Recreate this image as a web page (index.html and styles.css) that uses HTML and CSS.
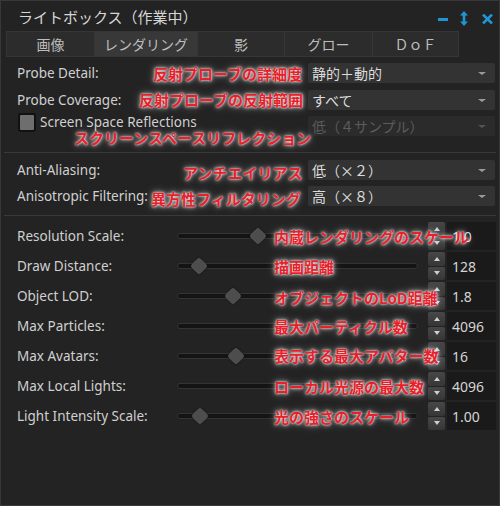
FILE: index.html
```html
<!DOCTYPE html>
<html lang="ja">
<head>
<meta charset="utf-8">
<title>ライトボックス（作業中）</title>
<link rel="stylesheet" href="styles.css">
</head>
<body>
<div class="win">
  <div class="titlebar">
    <span class="title">ライトボックス（作業中）</span>
    <div class="ctrls">
      <svg class="ic min" width="10" height="4" viewBox="0 0 10 4"><rect x="0" y="0" width="10" height="3" fill="#1e95d4"/></svg>
      <svg class="ic ud" width="8" height="15" viewBox="0 0 8 15"><path d="M4 0 L8 4.5 L5.3 4.5 L5.3 10.5 L8 10.5 L4 15 L0 10.5 L2.7 10.5 L2.7 4.5 L0 4.5 Z" fill="#1e95d4"/></svg>
      <svg class="ic cls" width="11" height="10" viewBox="0 0 11 10"><path d="M1 0.5 L10 9.5 M10 0.5 L1 9.5" stroke="#1e95d4" stroke-width="2.6"/></svg>
    </div>
  </div>

  <div class="tabs">
    <div class="tab t1">画像</div>
    <div class="tab t2 active">レンダリング</div>
    <div class="tab t3">影</div>
    <div class="tab t4">グロー</div>
    <div class="tab t5">ＤｏＦ</div>
  </div>

  <div class="panel">
    <div class="drow r1">
      <span class="label">Probe Detail:</span>
      <div class="combo"><span>静的＋動的</span><i class="caret"></i></div>
    </div>
    <div class="drow r2">
      <span class="label">Probe Coverage:</span>
      <div class="combo"><span>すべて</span><i class="caret"></i></div>
    </div>
    <div class="drow r3">
      <label class="check"><span class="box"></span>Screen Space Reflections</label>
      <div class="combo disabled"><span>低（４サンプル）</span><i class="caret"></i></div>
    </div>

    <div class="sep s1"></div>

    <div class="drow r4">
      <span class="label">Anti-Aliasing:</span>
      <div class="combo"><span>低（×２）</span><i class="caret"></i></div>
    </div>
    <div class="drow r5">
      <span class="label">Anisotropic Filtering:</span>
      <div class="combo"><span>高（×８）</span><i class="caret"></i></div>
    </div>

    <div class="sep s2"></div>

    <div class="sliders">
      <div class="srow">
        <span class="slabel">Resolution Scale:</span>
        <div class="track"><span class="thumb" style="left:72px"></span></div>
        <div class="spin"><div class="btns"><b class="up"></b><b class="down"></b></div><div class="val">1.0</div></div>
      </div>
      <div class="srow">
        <span class="slabel">Draw Distance:</span>
        <div class="track"><span class="thumb" style="left:13px"></span></div>
        <div class="spin"><div class="btns"><b class="up"></b><b class="down"></b></div><div class="val">128</div></div>
      </div>
      <div class="srow">
        <span class="slabel">Object LOD:</span>
        <div class="track"><span class="thumb" style="left:47px"></span></div>
        <div class="spin"><div class="btns"><b class="up"></b><b class="down"></b></div><div class="val">1.8</div></div>
      </div>
      <div class="srow">
        <span class="slabel">Max Particles:</span>
        <div class="track"></div>
        <div class="spin"><div class="btns"><b class="up"></b><b class="down"></b></div><div class="val">4096</div></div>
      </div>
      <div class="srow">
        <span class="slabel">Max Avatars:</span>
        <div class="track"><span class="thumb" style="left:50px"></span></div>
        <div class="spin"><div class="btns"><b class="up"></b><b class="down"></b></div><div class="val">16</div></div>
      </div>
      <div class="srow">
        <span class="slabel">Max Local Lights:</span>
        <div class="track"></div>
        <div class="spin"><div class="btns"><b class="up"></b><b class="down"></b></div><div class="val">4096</div></div>
      </div>
      <div class="srow">
        <span class="slabel">Light Intensity Scale:</span>
        <div class="track"><span class="thumb" style="left:14px"></span></div>
        <div class="spin"><div class="btns"><b class="up"></b><b class="down"></b></div><div class="val">1.00</div></div>
      </div>
    </div>
  </div>

  <span class="note n1">反射プローブの詳細度</span>
  <span class="note n2">反射プローブの反射範囲</span>
  <span class="note n3">スクリーンスペースリフレクション</span>
  <span class="note n4">アンチエイリアス</span>
  <span class="note n5">異方性フィルタリング</span>
  <span class="note n6">内蔵レンダリングのスケール</span>
  <span class="note n7">描画距離</span>
  <span class="note n8">オブジェクトのLoD距離</span>
  <span class="note n9">最大パーティクル数</span>
  <span class="note n10">表示する最大アバター数</span>
  <span class="note n11">ローカル光源の最大数</span>
  <span class="note n12">光の強さのスケール</span>
</div>
</body>
</html>
```

FILE: styles.css
```css
* { box-sizing: border-box; }
html, body { margin: 0; padding: 0; background: #1c1c1c; }
body {
  font-family: "Noto Sans", "Noto Sans CJK JP", sans-serif;
  color: #d2d2d2;
}
.win {
  position: relative;
  width: 500px;
  height: 506px;
  background: #232323;
  border: 1px solid #383838;
  overflow: hidden;
}
.titlebar {
  display: flex;
  align-items: center;
  height: 30px;
  padding-left: 17px;
}
.title {
  font-family: "Noto Sans CJK JP", sans-serif;
  font-size: 15px;
  color: #d6d6d6;
  line-height: 20px;
  margin-top: 2px;
}
.ctrls {
  margin-left: auto;
  display: flex;
  align-items: center;
  padding-right: 6px;
}
.ic { display: block; }
.min { margin-top: 7px; margin-right: 12px; }
.ud { margin-top: 4px; margin-right: 14px; }
.cls { margin-top: 5px; }

.tabs {
  display: flex;
  margin-left: 5px;
  height: 26px;
}
.tab {
  height: 26px;
  display: flex;
  align-items: center;
  justify-content: center;
  background: #2c2c2c;
  border: 1px solid #363636;
  border-left: none;
  font-family: "Noto Sans CJK JP", sans-serif;
  font-size: 14px;
  color: #bdbdbd;
}
.tab.t1 { width: 89px; border-left: 1px solid #363636; }
.tab.t2 { width: 103px; }
.tab.t3 { width: 87px; }
.tab.t4 { width: 88px; }
.tab.t5 { width: 86px; }
.tab.active { background: #383838; }

.panel { padding-top: 6px; }
.drow {
  display: flex;
  align-items: center;
  height: 20px;
  padding-left: 16px;
  padding-right: 4px;
}
.r2 { margin-top: 7px; }
.r3 { margin-top: 6px; }
.r4 { margin-top: 7px; }
.r5 { margin-top: 6px; }
.label {
  width: 291px;
  font-size: 13.5px;
  line-height: 20px;
  color: #d0d0d0;
}
.combo {
  flex: 1;
  height: 20px;
  background: #333333;
  border-radius: 2px;
  display: flex;
  align-items: center;
  padding-left: 4px;
  font-family: "Noto Sans CJK JP", sans-serif;
  font-size: 14px;
  color: #dcdcdc;
}
.caret {
  margin-left: auto;
  margin-right: 9px;
  width: 0;
  height: 0;
  border-left: 4px solid transparent;
  border-right: 4px solid transparent;
  border-top: 3px solid #9a9a9a;
}
.combo.disabled { background: #2b2b2b; color: #5c5c5c; }
.combo.disabled .caret { border-top-color: #555; }
.check {
  width: 291px;
  display: flex;
  align-items: center;
  font-size: 13.5px;
  color: #d0d0d0;
  margin-top: -8px;
}
.box {
  width: 18px;
  height: 19px;
  background: #6e6e6e;
  border: 2px solid #111;
  border-radius: 3px;
  margin-right: 4px;
  margin-left: 1px;
}
.sep {
  height: 1px;
  background: #393939;
  margin-left: 3px;
  margin-right: 3px;
}
.s1 { margin-top: 16px; }
.s2 { margin-top: 9px; }

.sliders {
  display: flex;
  flex-direction: column;
  gap: 2px;
  margin-top: 6px;
  padding-left: 16px;
}
.srow {
  display: flex;
  align-items: center;
  height: 28px;
}
.slabel {
  width: 160px;
  font-size: 13.5px;
  color: #d0d0d0;
}
.track {
  position: relative;
  width: 241px;
  height: 6px;
  background: #141414;
  border: 1px solid #343434;
  border-radius: 3px;
  margin-right: 10px;
}
.thumb {
  position: absolute;
  top: -6px;
  width: 16px;
  height: 16px;
  background: #4d4d4d;
  border: 1px solid #5a5a5a;
  border-radius: 4px;
  transform: rotate(45deg) scale(0.8);
  box-shadow: 0 0 2px #111;
}
.spin {
  display: flex;
  height: 28px;
  gap: 2px;
}
.btns {
  display: flex;
  flex-direction: column;
  width: 17px;
  gap: 1px;
}
.btns b {
  flex: 1;
  display: flex;
  align-items: center;
  justify-content: center;
  background: linear-gradient(#474747, #363636);
  border-radius: 2px;
}
.btns b::after {
  content: "";
  width: 0;
  height: 0;
  border-left: 3.5px solid transparent;
  border-right: 3.5px solid transparent;
}
.btns .up::after { border-bottom: 4px solid #cfcfcf; }
.btns .down::after { border-top: 4px solid #cfcfcf; }
.val {
  width: 49px;
  background: #1a1a1a;
  font-size: 14px;
  color: #d4d4d4;
  display: flex;
  align-items: center;
  padding-left: 5px;
}

.note {
  position: absolute;
  font-family: "Noto Sans CJK JP", sans-serif;
  font-weight: 700;
  font-size: 15px;
  line-height: 20px;
  color: #e8202a;
  white-space: nowrap;
  text-shadow: 0 0 2px rgba(255,255,255,1), 0 0 4px rgba(255,255,255,0.8), 0 0 8px rgba(255,255,255,0.5);
}
.n1 { left: 152px; top: 63px; }
.n2 { left: 138px; top: 89px; }
.n3 { left: 73px; top: 127px; }
.n4 { left: 182px; top: 162px; }
.n5 { left: 150px; top: 188px; }
.n6 { left: 273px; top: 226px; }
.n7 { left: 273px; top: 256px; }
.n8 { left: 273px; top: 287px; }
.n9 { left: 273px; top: 316px; }
.n10 { left: 273px; top: 345px; }
.n11 { left: 273px; top: 376px; }
.n12 { left: 273px; top: 406px; }
```
